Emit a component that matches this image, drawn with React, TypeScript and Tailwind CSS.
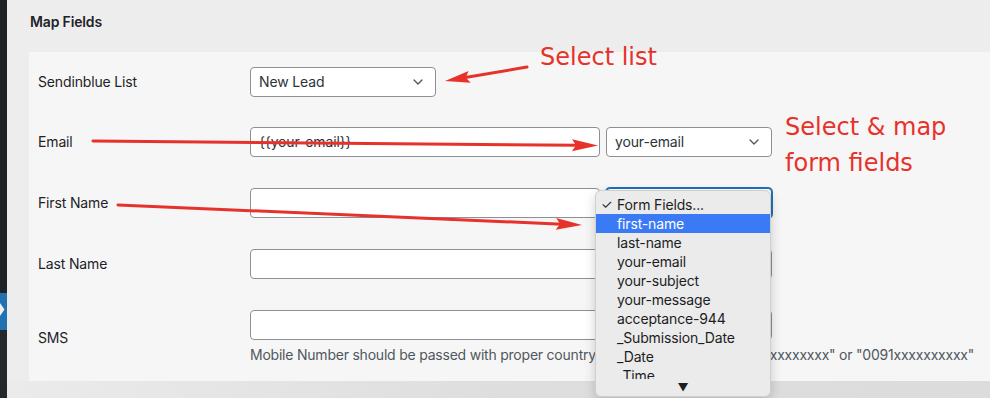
import React from 'react'
import { ChevronDown } from 'lucide-react'

const RED = '#e6322a'

type Pt = [number, number]

const Arrow: React.FC<{ from: Pt; to: Pt; len?: number; half?: number; width?: number }> = ({
  from,
  to,
  len = 26,
  half = 6,
  width = 3
}) => {
  const dx = to[0] - from[0]
  const dy = to[1] - from[1]
  const d = Math.hypot(dx, dy)
  const ux = dx / d
  const uy = dy / d
  const nx = -uy
  const ny = ux
  const bx = to[0] - ux * len
  const by = to[1] - uy * len
  const pts = [
    [to[0], to[1]],
    [bx + nx * half, by + ny * half],
    [bx + ux * 4, by + uy * 4],
    [bx - nx * half, by - ny * half]
  ]
    .map((p) => p.join(','))
    .join(' ')
  return (
    <g>
      <line x1={from[0]} y1={from[1]} x2={bx + ux * 6} y2={by + uy * 6} stroke={RED} strokeWidth={width} strokeLinecap="round" />
      <polygon points={pts} fill={RED} />
    </g>
  )
}

const Select: React.FC<{ value?: string; width: string; focused?: boolean }> = ({ value, width, focused }) => (
  <div
    className={`flex h-[30px] ${width} items-center justify-between rounded-[4px] border bg-white pl-[8px] pr-[9px] text-[#2c3338] ${
      focused ? 'border-[#2271b1] shadow-[0_0_0_1px_#2271b1]' : 'border-[#8c8f94]'
    }`}
  >
    <span>{value}</span>
    <ChevronDown className="h-4 w-4 text-[#50575e]" strokeWidth={2} />
  </div>
)

const Input: React.FC<{ value?: string }> = ({ value }) => (
  <div className="flex h-[30px] w-[350px] items-center rounded-[4px] border border-[#8c8f94] bg-white px-[8px] text-[#2c3338]">
    {value}
  </div>
)

const Row: React.FC<{ label: string; first?: boolean; children: React.ReactNode }> = ({ label, first, children }) => (
  <div className={`flex ${first ? 'pt-[15px] pb-[15px]' : 'pt-[15px] pb-[16px]'}`}>
    <div className="flex w-[212px] shrink-0 items-center text-[#1d2327]">{label}</div>
    <div className="flex min-w-0 flex-col">{children}</div>
  </div>
)

const options = [
  'last-name',
  'your-email',
  'your-subject',
  'your-message',
  'acceptance-944',
  '_Submission_Date',
  '_Date',
  '_Time'
]

export default function App() {
  return (
    <div className="relative flex h-[398px] w-[990px] overflow-hidden font-['Inter',sans-serif] text-[14px] leading-[20px] tracking-[-0.15px]">
      <aside className="flex w-[7px] shrink-0 flex-col">
        <div className="h-[293px] bg-[#1d2327]" />
        <div className="relative h-[37px] bg-[#2271b1]">
          <svg className="absolute left-0 top-[10px]" width="7" height="14" viewBox="0 0 7 14">
            <polygon points="0,0 4.5,6.5 0,13" fill="#f0f0f1" />
          </svg>
        </div>
        <div className="flex-1 bg-[#23282d]" />
      </aside>

      <main className="flex min-w-0 flex-1 flex-col overflow-hidden bg-[#ededed]">
        <div className="h-[52px] pl-[23px] pt-[12px] font-semibold text-[#1d2327]">Map Fields</div>
        <section className="ml-[22px] bg-[#f6f6f6] pl-[9px]">
          <Row label="Sendinblue List" first>
            <Select value="New Lead" width="w-[186px]" />
          </Row>
          <Row label="Email">
            <div className="flex gap-[6px]">
              <Input value="{{your-email}}" />
              <Select value="your-email" width="w-[166px]" />
            </div>
          </Row>
          <Row label="First Name">
            <div className="flex gap-[6px]">
              <Input />
              <Select value="Form Fields..." width="w-[166px]" focused />
            </div>
          </Row>
          <Row label="Last Name">
            <div className="flex gap-[6px]">
              <Input />
              <Select value="Form Fields..." width="w-[166px]" />
            </div>
          </Row>
          <Row label="SMS">
            <div className="flex gap-[6px]">
              <Input />
              <Select value="Form Fields..." width="w-[166px]" />
            </div>
            <p className="mt-[5px] whitespace-nowrap tracking-[-0.22px] text-[#50575e]">
              Mobile Number should be passed with proper country code. For example: "+91xxxxxxxxxx" or "0091xxxxxxxxxx"
            </p>
          </Row>
        </section>
        <div className="flex-1 bg-gradient-to-r from-[#ebebeb] via-[#dedede] to-[#dcdcdc]" />
      </main>

      {/* annotations */}
      <svg className="pointer-events-none absolute left-0 top-0" width="990" height="398">
        <Arrow from={[527, 67]} to={[445, 81]} len={25} half={6} />
        <Arrow from={[93, 141]} to={[598, 145.5]} len={26} half={6} />
        <Arrow from={[118, 205]} to={[582, 225]} len={26} half={6} />
      </svg>
      <div className="absolute left-[540px] top-[45px] font-['DejaVu_Sans',sans-serif] text-[24px] leading-[24px] tracking-normal" style={{ color: RED }}>
        Select list
      </div>
      <div className="absolute left-[785px] top-[109px] font-['DejaVu_Sans',sans-serif] text-[24px] leading-[36px] tracking-normal" style={{ color: RED }}>
        Select &amp; map
        <br />
        form fields
      </div>

      {/* native select popup */}
      <div className="absolute left-[595px] top-[190px] flex h-[207px] w-[176px] flex-col overflow-hidden rounded-[6px] border border-[#cfcfcf] bg-[#ebebeb] text-[#1d1d1f] shadow-[0_4px_12px_rgba(0,0,0,0.18)]">
        <div className="h-[188px] overflow-hidden pt-[4px]">
          <div className="relative h-[19px] pl-[21px] leading-[19px]">
            <span className="absolute left-[5px] text-[13px]">✓</span>
            Form Fields...
          </div>
          <div className="h-[19px] bg-[#3b7af5] pl-[21px] leading-[19px] text-white">first-name</div>
          {options.map((o) => (
            <div key={o} className="h-[19px] pl-[21px] leading-[19px]">
              {o}
            </div>
          ))}
        </div>
        <div className="flex flex-1 items-center justify-center text-[11px] leading-none text-[#1d1d1f]">▼</div>
      </div>
    </div>
  )
}
